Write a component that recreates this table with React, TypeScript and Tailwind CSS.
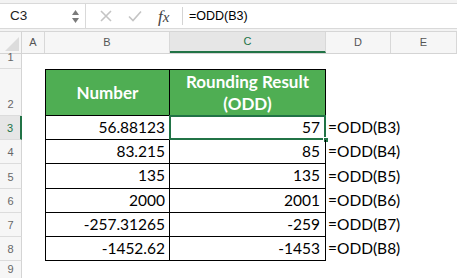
import React from "react";

const cols = ["A", "B", "C", "D", "E"];
const colW = ["w-[23px]", "w-[125px]", "w-[156px]", "w-[65px]", "w-[66px]"];
const rowH = ["h-[15px]", "h-[47px]", "h-[24px]", "h-[24px]", "h-[25px]", "h-[24px]", "h-[24px]", "h-[24px]", "h-[20px]"];

const data = [
  { n: "56.88123", r: "57", f: "=ODD(B3)" },
  { n: "83.215", r: "85", f: "=ODD(B4)" },
  { n: "135", r: "135", f: "=ODD(B5)" },
  { n: "2000", r: "2001", f: "=ODD(B6)" },
  { n: "-257.31265", r: "-259", f: "=ODD(B7)" },
  { n: "-1452.62", r: "-1453", f: "=ODD(B8)" },
];

const ui = "font-['Liberation_Sans',Arial,sans-serif]";
const cell = "font-['Lato',sans-serif] text-[15.5px] text-black";

function FormulaBar() {
  return (
    <div className="flex h-[32px] bg-[#f3f3f3] border-b border-[#d6d6d6] pt-[3px] pb-[2px]">
      <div className="flex w-[86px] items-center justify-between bg-white border border-[#d9d9d9] border-l-0 pl-[10px] pr-[6px]">
        <span className={`${ui} text-[13.5px] text-[#222]`}>C3</span>
        <div className="flex flex-col gap-[3px]">
          <svg width="7" height="5" viewBox="0 0 7 5"><path d="M0 5 L3.5 0 L7 5 Z" fill="#7a7a7a" /></svg>
          <svg width="7" height="5" viewBox="0 0 7 5"><path d="M0 0 L3.5 5 L7 0 Z" fill="#7a7a7a" /></svg>
        </div>
      </div>
      <div className="flex items-center pl-[14px] gap-[16px] bg-white w-[96px] border-y border-[#d9d9d9]">
        <svg width="12" height="12" viewBox="0 0 12 12">
          <path d="M1 1 L11 11 M11 1 L1 11" stroke="#c4c4c4" strokeWidth="1.6" />
        </svg>
        <svg width="14" height="12" viewBox="0 0 14 12">
          <path d="M1 6.5 L5 10.5 L13 1.5" stroke="#c4c4c4" strokeWidth="1.6" fill="none" />
        </svg>
        <span className="font-['Liberation_Serif',serif] italic text-[17px] text-[#444] leading-none">
          f<span className="text-[15px]">x</span>
        </span>
      </div>
      <div className="flex flex-1 items-center bg-white border-y border-[#d9d9d9]">
        <div className="w-px h-[18px] bg-[#d4d4d4]" />
        <span className={`${ui} text-[12.5px] text-black pl-[6px]`}>=ODD(B3)</span>
      </div>
    </div>
  );
}

function ColumnHeaders() {
  return (
    <div className="flex h-[22px] bg-[#f6f6f6] border-b border-[#d4d4d4]">
      <div className="relative w-[22px] border-r border-[#d4d4d4]">
        <svg className="absolute right-[2px] bottom-[2px]" width="14" height="14" viewBox="0 0 14 14">
          <path d="M14 0 L14 14 L0 14 Z" fill="#dcdcdc" />
        </svg>
      </div>
      {cols.map((c, i) => {
        const sel = c === "C";
        return (
          <div
            key={c}
            className={`${colW[i]} flex items-center justify-center border-r border-[#d8d8d8] ${ui} text-[11px] ${
              sel ? "bg-[#e6e6e6] text-[#217346] border-b-2 border-b-[#217346]" : "text-[#555]"
            }`}
          >
            {c}
          </div>
        );
      })}
    </div>
  );
}

function RowHeader({ n, h }: { n: number; h: string }) {
  const sel = n === 3;
  return (
    <div
      className={`${h} w-[22px] flex items-end justify-center pb-[3px] border-b border-[#dcdcdc] ${ui} text-[11px] ${
        sel ? "bg-[#e6e6e6] text-[#217346] border-r-2 border-r-[#217346]" : "bg-[#f6f6f6] text-[#666] border-r border-r-[#d4d4d4]"
      }`}
    >
      {n}
    </div>
  );
}

export default function App() {
  return (
    <div className="w-[457px] h-[278px] overflow-hidden bg-white">
      <FormulaBar />
      <ColumnHeaders />
      <div className="flex">
        <div className="flex flex-col">
          {rowH.map((h, i) => (
            <RowHeader key={i} n={i + 1} h={h} />
          ))}
        </div>
        <div className="flex flex-col">
          <div className="h-[15px]" />
          <div className="flex h-[47px]">
            <div className="w-[23px]" />
            <div className="w-[125px] flex items-center justify-center bg-[#4fae53] border border-black font-['Lato',sans-serif] font-bold text-[17px] text-white">
              Number
            </div>
            <div className="w-[156px] flex items-center justify-center text-center bg-[#4fae53] border border-l-0 border-black font-['Lato',sans-serif] font-bold text-[17px] leading-[22px] text-white">
              Rounding Result
              <br />
              (ODD)
            </div>
          </div>
          {data.map((d, i) => (
            <div key={i} className={`flex ${rowH[i + 2]}`}>
              <div className="w-[23px]" />
              <div className={`w-[125px] flex items-center justify-end pr-[4px] border-x border-b border-black ${cell}`}>
                {d.n}
              </div>
              <div className={`relative w-[156px] flex items-center justify-end pr-[5px] border-r border-b border-black ${cell}`}>
                {d.r}
                {i === 0 && (
                  <>
                    <div className="absolute -left-px -top-px -right-px -bottom-px border-2 border-[#217346]" />
                    <div className="absolute right-[-4px] bottom-[-4px] w-[6px] h-[6px] bg-[#217346] border border-white" />
                  </>
                )}
              </div>
              <div className={`w-[65px] flex items-center pl-[2px] whitespace-nowrap ${cell}`}>{d.f}</div>
            </div>
          ))}
        </div>
      </div>
    </div>
  );
}
